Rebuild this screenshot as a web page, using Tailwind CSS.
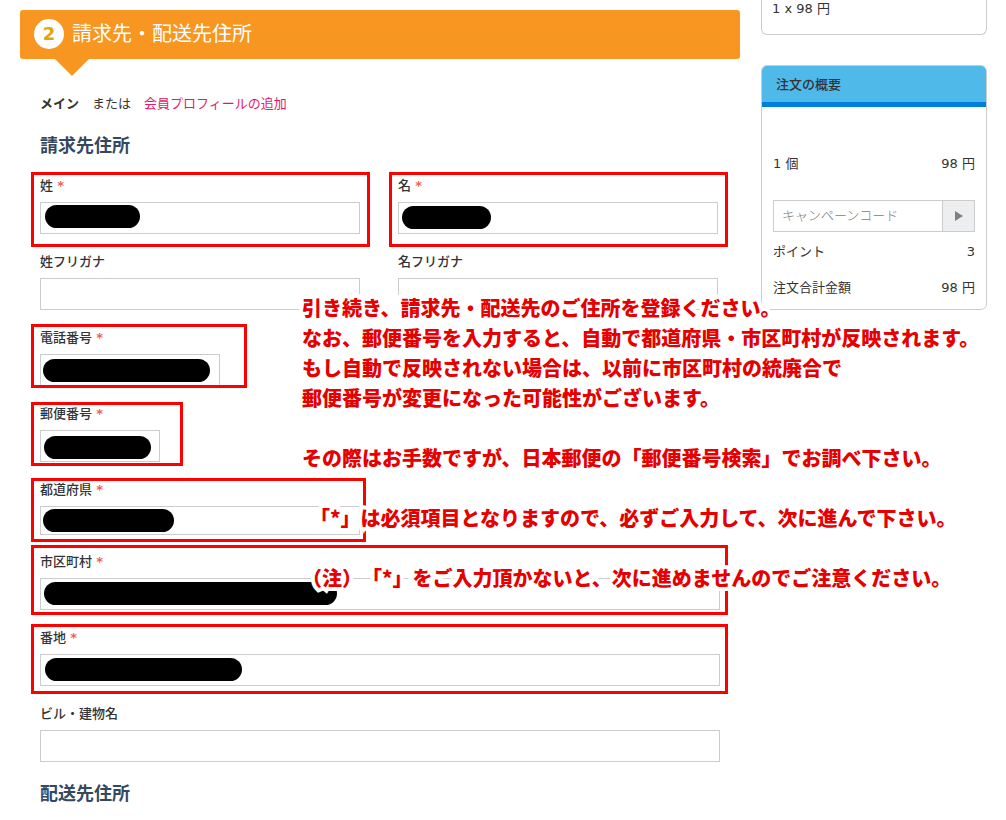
<!DOCTYPE html>
<html lang="ja">
<head>
  <meta charset="UTF-8" />
  <meta name="viewport" content="width=device-width, initial-scale=1" />
  <title>請求先・配送先住所</title>
  <script src="https://cdn.jsdelivr.net/npm/@tailwindcss/browser@4"></script>
</head>
<body class="bg-white font-['DejaVu_Sans','Noto_Sans_CJK_JP',sans-serif] text-[13px] leading-[22px] text-[#333]">

  <div class="relative flex items-start gap-[21px] overflow-x-clip pl-5 pr-[19px]">

    <!-- Address form -->
    <main class="min-w-0 flex-1 pt-2.5">
      <div class="relative flex h-[49px] items-center gap-2 rounded-[3px] bg-[#f89622] px-3.5 pb-0.5">
        <span class="flex h-[30px] w-[30px] items-center justify-center rounded-full bg-white text-[18px] font-bold text-[#e5a50a]">2</span>
        <h1 class="text-[20px] leading-7 text-white">請求先・配送先住所</h1>
        <svg class="absolute left-[35px] top-full" width="34" height="17" viewBox="0 0 34 17" aria-hidden="true"><path d="M0 0h34L17 17z" fill="#f89622" /></svg>
      </div>

      <form class="px-5 pt-[34px]">
        <p class="flex gap-[13px]">
          <strong>メイン</strong>
          <span>または</span>
          <a href="#" class="text-[#e8176b]">会員プロフィールの追加</a>
        </p>

        <h2 class="mb-3.5 mt-4 text-[18px] font-bold leading-[30px] text-[#34495e]">請求先住所</h2>

        <div class="grid grid-cols-2 gap-x-[38px] pr-0.5">
          <div class="relative mb-[17px]">
            <label for="lastName" class="mb-[5px] block font-medium">姓 <span class="font-bold text-[#ee6352]">*</span></label>
            <div class="relative">
              <input id="lastName" type="text" class="block h-8 w-full border border-[#ccc] px-2" />
              <span class="absolute left-[5px] top-[3px] h-[23px] w-[95px] rounded-full bg-black"></span>
            </div>
            <span class="pointer-events-none absolute -bottom-[13px] -left-[9px] -right-2.5 -top-[3px] border-3 border-[#f00]"></span>
          </div>
          <div class="relative mb-[17px]">
            <label for="firstName" class="mb-[5px] block font-medium">名 <span class="font-bold text-[#ee6352]">*</span></label>
            <div class="relative">
              <input id="firstName" type="text" class="block h-8 w-full border border-[#ccc] px-2" />
              <span class="absolute left-1 top-1 h-[23px] w-[89px] rounded-full bg-black"></span>
            </div>
            <span class="pointer-events-none absolute -bottom-[13px] -left-[9px] -right-2.5 -top-[3px] border-3 border-[#f00]"></span>
          </div>
          <div class="mb-[17px]">
            <label for="lastKana" class="mb-[5px] block font-medium">姓フリガナ</label>
            <input id="lastKana" type="text" class="block h-8 w-full border border-[#ccc] px-2" />
          </div>
          <div class="mb-[17px]">
            <label for="firstKana" class="mb-[5px] block font-medium">名フリガナ</label>
            <input id="firstKana" type="text" class="block h-8 w-full border border-[#ccc] px-2" />
          </div>
        </div>

        <div class="relative mb-[17px] w-[180px]">
          <label for="phone" class="mb-[5px] block font-medium">電話番号 <span class="font-bold text-[#ee6352]">*</span></label>
          <div class="relative">
            <input id="phone" type="tel" class="block h-8 w-full border border-[#ccc] px-2" />
            <span class="absolute left-[3px] top-[5px] h-[23px] w-[167px] rounded-full bg-black"></span>
          </div>
          <span class="pointer-events-none absolute -bottom-0.5 -left-[9px] -right-[27px] -top-[3px] border-3 border-[#f00]"></span>
        </div>

        <div class="relative mb-[17px] w-[120px]">
          <label for="zip" class="mb-[5px] block font-medium">郵便番号 <span class="font-bold text-[#ee6352]">*</span></label>
          <div class="relative">
            <input id="zip" type="text" class="block h-8 w-full border border-[#ccc] px-2" />
            <span class="absolute left-1 top-1.5 h-[23px] w-[107px] rounded-full bg-black"></span>
          </div>
          <span class="pointer-events-none absolute -bottom-1 -left-[9px] -right-[23px] -top-px border-3 border-[#f00]"></span>
        </div>

        <div class="relative mb-4 w-[320px]">
          <label for="pref" class="mb-[5px] block font-medium">都道府県 <span class="font-bold text-[#ee6352]">*</span></label>
          <div class="relative">
            <select id="pref" class="block h-[29px] w-full appearance-none border border-[#ccc] px-2"><option></option></select>
            <span class="absolute left-[3px] top-[3px] h-[23px] w-[131px] rounded-full bg-black"></span>
          </div>
          <span class="pointer-events-none absolute -bottom-[7px] -left-[9px] -right-1.5 -top-px border-3 border-[#f00]"></span>
        </div>

        <div class="relative mb-[17px]">
          <label for="city" class="mb-[5px] block font-medium">市区町村 <span class="font-bold text-[#ee6352]">*</span></label>
          <div class="relative">
            <input id="city" type="text" class="block h-8 w-full border border-[#ccc] px-2" />
            <span class="absolute left-1 top-1 h-[23px] w-[293px] rounded-full bg-black"></span>
          </div>
          <span class="pointer-events-none absolute -bottom-[5px] -left-[9px] -right-2 -top-1.5 border-3 border-[#f00]"></span>
        </div>

        <div class="relative mb-[17px]">
          <label for="street" class="mb-[5px] block font-medium">番地 <span class="font-bold text-[#ee6352]">*</span></label>
          <div class="relative">
            <input id="street" type="text" class="block h-8 w-full border border-[#ccc] px-2" />
            <span class="absolute left-[5px] top-1 h-[23px] w-[197px] rounded-full bg-black"></span>
          </div>
          <span class="pointer-events-none absolute -bottom-2 -left-[9px] -right-2 -top-[3px] border-3 border-[#f00]"></span>
        </div>

        <div class="mb-[17px]">
          <label for="building" class="mb-[5px] block font-medium">ビル・建物名</label>
          <input id="building" type="text" class="block h-8 w-full border border-[#ccc] px-2" />
        </div>

        <h2 class="text-[18px] font-bold leading-[30px] text-[#34495e]">配送先住所</h2>
      </form>
    </main>

    <!-- Order sidebar -->
    <aside class="w-[226px] shrink-0">
      <div class="rounded-b-md border border-t-0 border-[#ccc] px-2.5 pb-3.5">
        <p class="-mt-0.5">1 x 98 円</p>
      </div>

      <section class="mt-[30px] rounded-md border border-[#ccc] pb-2.5">
        <h2 class="rounded-t-[5px] border-b-5 border-[#007fdb] bg-[#4fb9ea] px-3.5 pb-1.5 pt-2 font-medium">注文の概要</h2>
        <div class="px-[11px] pt-[46px]">
          <p class="flex justify-between"><span>1 個</span><span>98 円</span></p>
          <div class="mb-[9px] mt-[25px] flex h-8 border border-[#ccc]">
            <input type="text" aria-label="キャンペーンコード" placeholder="キャンペーンコード" class="min-w-0 flex-1 px-2 font-light placeholder:text-[#808080]" />
            <button type="button" aria-label="適用" class="flex w-8 items-center justify-center border-l border-[#ccc] bg-[#edeef0]">
              <svg width="8" height="10" viewBox="0 0 8 10" aria-hidden="true"><path d="M0 0l8 5-8 5z" fill="#808080" /></svg>
            </button>
          </div>
          <p class="flex justify-between"><span>ポイント</span><span>3</span></p>
          <p class="mt-3.5 flex justify-between"><span>注文合計金額</span><span>98 円</span></p>
        </div>
      </section>
    </aside>

    <!-- Guide text laid over the form -->
    <div class="pointer-events-none absolute left-[302px] top-[293px] whitespace-nowrap font-['Noto_Sans_CJK_JP',sans-serif] text-[20px] font-black leading-[30px] text-[#e60000] [-webkit-text-stroke:8px_white] [paint-order:stroke] [stroke-linejoin:round] [text-spacing-trim:space-all]">
      <p>引き続き、請求先・配送先のご住所を登録ください。</p>
      <p>なお、郵便番号を入力すると、自動で都道府県・市区町村が反映されます。</p>
      <p>もし自動で反映されない場合は、以前に市区町村の統廃合で</p>
      <p>郵便番号が変更になった可能性がございます。</p>
      <p class="mt-[30px]">その際はお手数ですが、日本郵便の「郵便番号検索」でお調べ下さい。</p>
      <p class="mt-[30px] pl-2">「*」は必須項目となりますので、必ずご入力して、次に進んで下さい。</p>
      <p class="mt-[30px]">（注）「*」をご入力頂かないと、次に進めませんのでご注意ください。</p>
    </div>
  </div>

</body>
</html>
